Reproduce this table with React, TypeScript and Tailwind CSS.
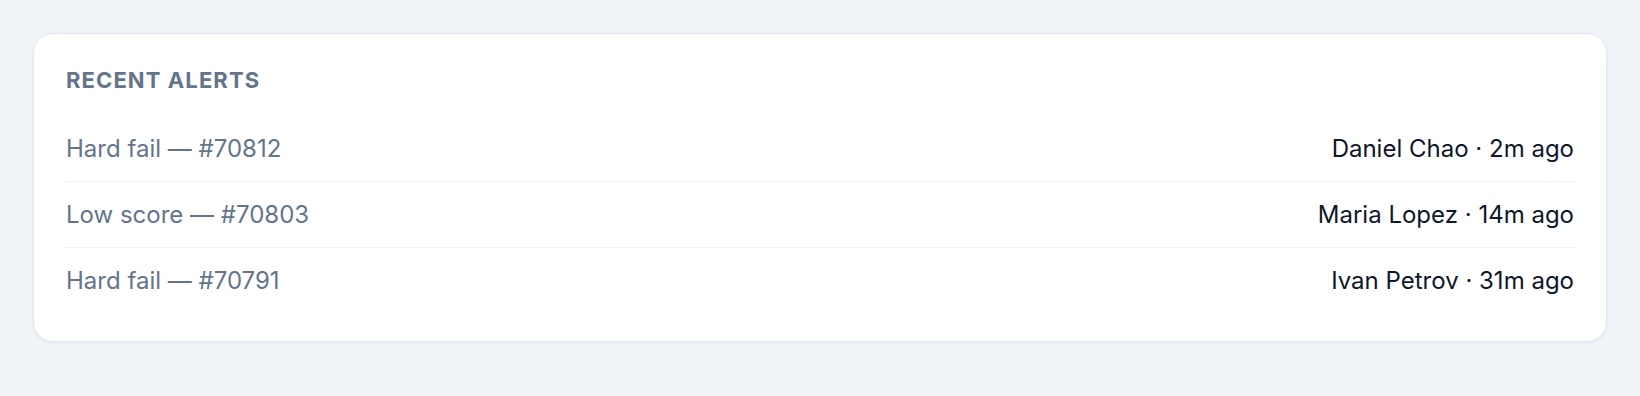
const alerts = [
  { label: "Hard fail — #70812", who: "Daniel Chao", when: "2m ago" },
  { label: "Low score — #70803", who: "Maria Lopez", when: "14m ago" },
  { label: "Hard fail — #70791", who: "Ivan Petrov", when: "31m ago" },
];

export default function App() {
  return (
    <div className="min-h-screen bg-[#f0f4f9] px-[33px] pt-[33px] font-['Inter',sans-serif]">
      <div className="rounded-[20px] border border-[#e2e8f0] bg-white px-8 pt-8 pb-7 shadow-[0_1px_3px_rgba(15,23,42,0.06)]">
        <h2 className="text-[22px] leading-7 font-bold tracking-[0.05em] text-[#64748b]">
          RECENT ALERTS
        </h2>
        <ul className="mt-[22px]">
          {alerts.map((a, i) => (
            <li
              key={a.label}
              className={
                "flex items-center justify-between py-4 text-[24px] leading-[33px] " +
                (i < alerts.length - 1 ? "border-b border-[#eef2f6]" : "")
              }
            >
              <span className="text-[#64748b]">{a.label}</span>
              <span className="text-[#0f172a]">
                {a.who} · {a.when}
              </span>
            </li>
          ))}
        </ul>
      </div>
    </div>
  );
}
